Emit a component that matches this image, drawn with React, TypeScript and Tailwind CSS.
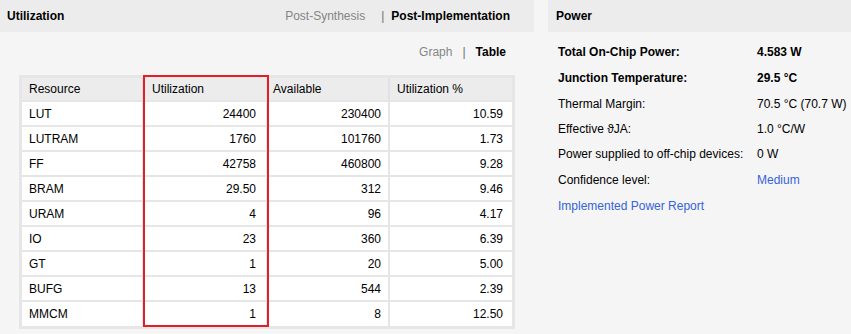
const rows = [
  { name: 'LUT', used: '24400', avail: '230400', pct: '10.59' },
  { name: 'LUTRAM', used: '1760', avail: '101760', pct: '1.73' },
  { name: 'FF', used: '42758', avail: '460800', pct: '9.28' },
  { name: 'BRAM', used: '29.50', avail: '312', pct: '9.46' },
  { name: 'URAM', used: '4', avail: '96', pct: '4.17' },
  { name: 'IO', used: '23', avail: '360', pct: '6.39' },
  { name: 'GT', used: '1', avail: '20', pct: '5.00' },
  { name: 'BUFG', used: '13', avail: '544', pct: '2.39' },
  { name: 'MMCM', used: '1', avail: '8', pct: '12.50' },
]

const power = [
  { label: 'Total On-Chip Power:', value: '4.583 W', bold: true, h: 'h-[26px]' },
  { label: 'Junction Temperature:', value: '29.5 °C', bold: true, h: 'h-[26px]' },
  { label: 'Thermal Margin:', value: '70.5 °C (70.7 W)', h: 'h-[25px]' },
  { label: 'Effective ϑJA:', value: '1.0 °C/W', h: 'h-[25px]' },
  { label: 'Power supplied to off-chip devices:', value: '0 W', h: 'h-[26px]' },
  { label: 'Confidence level:', value: 'Medium', link: true, h: 'h-[26px]' },
]

function UtilizationPanel() {
  return (
    <div className="flex w-[534px] flex-col">
      <div className="flex h-[32px] items-center justify-between bg-[#ececec] pl-[7px] pr-[24px]">
        <span className="font-bold text-black">Utilization</span>
        <div className="flex items-center">
          <span className="text-[#858585]">Post-Synthesis</span>
          <span className="ml-[16px] mr-[7px] text-[#6f6f6f]">|</span>
          <span className="font-bold text-black">Post-Implementation</span>
        </div>
      </div>

      <div className="flex h-[24px] mt-[8px] items-center justify-end pr-[28px]">
        <span className="text-[#858585]">Graph</span>
        <span className="mx-[10px] text-[#6f6f6f]">|</span>
        <span className="font-bold text-black">Table</span>
      </div>

      <div className="relative ml-[19px] mt-[11px] w-[496px] border-[3px] border-[#e6e6e6]">
        <table className="w-full table-fixed border-collapse text-black">
          <colgroup>
            <col className="w-[121px]" />
            <col className="w-[124px]" />
            <col className="w-[122px]" />
            <col className="w-[123px]" />
          </colgroup>
          <thead>
            <tr className="h-[23px] bg-[#ececec] text-left">
              <th className="pl-[7px] font-normal">Resource</th>
              <th className="border-l-2 border-[#e2e2e2] pl-[8px] font-normal">Utilization</th>
              <th className="border-l-2 border-[#e2e2e2] pl-[5px] font-normal">Available</th>
              <th className="border-l-2 border-[#e2e2e2] pl-[7px] font-normal">Utilization %</th>
            </tr>
          </thead>
          <tbody className="bg-white">
            {rows.map((r) => (
              <tr key={r.name} className="h-[25px] border-t-2 border-[#e6e6e6]">
                <td className="pl-[7px]">{r.name}</td>
                <td className="border-l-2 border-[#e6e6e6] pr-[10px] text-right">{r.used}</td>
                <td className="border-l-2 border-[#e6e6e6] pr-[7px] text-right">{r.avail}</td>
                <td className="border-l-2 border-[#e6e6e6] pr-[9px] text-right">{r.pct}</td>
              </tr>
            ))}
          </tbody>
        </table>
        {/* highlight box drawn over the Utilization column */}
        <div className="pointer-events-none absolute -top-[3px] -bottom-[1px] left-[121px] w-[126px] border-2 border-[#e41e26]" />
      </div>
    </div>
  )
}

function PowerPanel() {
  return (
    <div className="ml-[14px] flex flex-1 flex-col">
      <div className="flex h-[32px] items-center bg-[#ececec] pl-[8px]">
        <span className="font-bold text-black">Power</span>
      </div>
      <div className="pl-[10px] pt-[7px] text-black">
        {power.map((p) => (
          <div key={p.label} className={`flex items-center ${p.h}`}>
            <span className={`w-[199px] ${p.bold ? 'font-bold' : ''}`}>{p.label}</span>
            <span
              className={
                p.link ? 'text-[#3563d8]' : p.bold ? 'font-bold' : ''
              }
            >
              {p.value}
            </span>
          </div>
        ))}
        <div className="flex h-[25px] items-center text-[#3563d8]">Implemented Power Report</div>
      </div>
    </div>
  )
}

export default function App() {
  return (
    <div className="flex h-[334px] w-[851px] bg-[#f5f5f5] font-['Liberation_Sans',Arial,sans-serif] text-[12px] text-black">
      <UtilizationPanel />
      <PowerPanel />
    </div>
  )
}
